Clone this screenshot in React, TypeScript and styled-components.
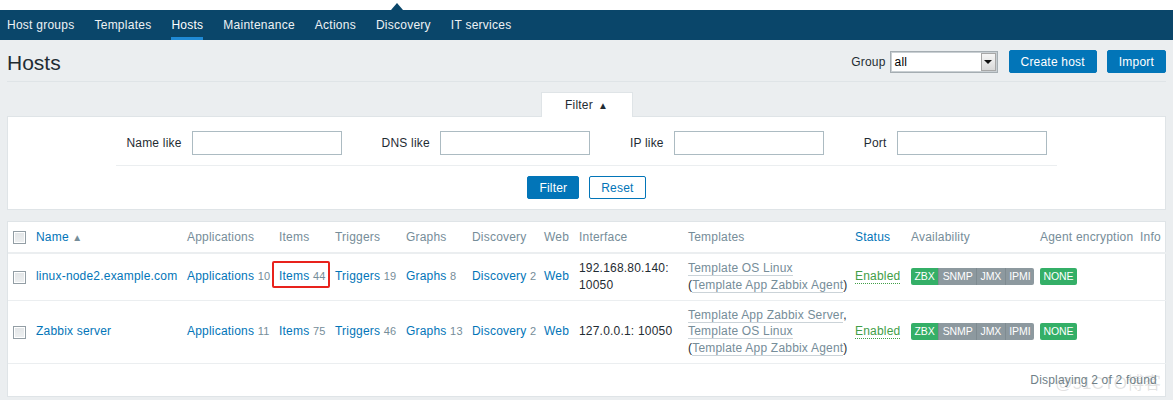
import React from "react";
import styled, { createGlobalStyle } from "styled-components";

const GlobalStyle = createGlobalStyle`
  body {
    margin: 0;
    background: #ebeef0;
    font-family: "Liberation Sans", Arial, sans-serif;
    font-size: 12px;
    letter-spacing: 0.2px;
    color: #1f2c33;
  }
`;

const TopStrip = styled.div`
  height: 10px;
  background: #fff;
  position: relative;

  &::after {
    content: "";
    position: absolute;
    left: 391px;
    bottom: 0;
    border-left: 6px solid transparent;
    border-right: 6px solid transparent;
    border-bottom: 7px solid #0a466a;
  }
`;

const SubNav = styled.nav`
  display: flex;
  gap: 20px;
  height: 30px;
  padding-left: 7px;
  background: #0a466a;
  letter-spacing: 0.25px;
`;

const NavLink = styled.a<{ $active?: boolean }>`
  display: flex;
  align-items: center;
  color: ${(p) => (p.$active ? "#ffffff" : "#eef2f5")};
  text-decoration: none;
  box-shadow: ${(p) => (p.$active ? "inset 0 -3px 0 #1f8ad6" : "none")};
`;

const PageHeader = styled.header`
  display: flex;
  align-items: center;
  justify-content: space-between;
  height: 39px;
  padding-top: 2px;
  margin: 0 7px;
  border-bottom: 1px solid #dfe4e7;
`;

const Title = styled.h1`
  margin: 2px 0 0;
  font-size: 21px;
  font-weight: normal;
  letter-spacing: 0;
  color: #1f2c33;
`;

const Controls = styled.div`
  display: flex;
  align-items: center;
`;

const GroupLabel = styled.span`
  margin-right: 4px;
`;

const GroupSelect = styled.div`
  display: flex;
  width: 108px;
  height: 22px;
  box-sizing: border-box;
  border: 1px solid #a5adb2;
  box-shadow: inset 0 0 0 1px #c9cfd3;
  background: #fff;
  margin-right: 11px;
`;

const SelectValue = styled.span`
  flex: 1;
  padding-left: 4px;
  line-height: 20px;
  color: #000;
`;

const SelectArrow = styled.span`
  width: 15px;
  margin: 1px;
  box-sizing: border-box;
  border: 1px solid #a7a7a7;
  background: linear-gradient(#f6f6f6, #d9d9d9);
  display: flex;
  align-items: center;
  justify-content: center;

  &::before {
    content: "";
    border-left: 4px solid transparent;
    border-right: 4px solid transparent;
    border-top: 4px solid #111;
  }
`;

const Button = styled.button<{ $outline?: boolean }>`
  height: 23px;
  padding: 0 11px;
  border-radius: 2px;
  border: 1px solid #0275b8;
  background: ${(p) => (p.$outline ? "#fff" : "#0275b8")};
  color: ${(p) => (p.$outline ? "#0275b8" : "#fff")};
  font: inherit;
  letter-spacing: inherit;
  cursor: pointer;

  & + & {
    margin-left: 10px;
  }
`;

const FilterSection = styled.section`
  display: flex;
  flex-direction: column;
  margin: 10px 7px 0;
`;

const FilterTab = styled.div`
  align-self: center;
  width: 92px;
  height: 25px;
  box-sizing: border-box;
  margin-bottom: -1px;
  background: #fff;
  border: 1px solid #dfe4e7;
  border-bottom: none;
  display: flex;
  align-items: center;
  justify-content: center;
  gap: 5px;
  position: relative;
  z-index: 1;
`;

const SmallArrow = styled.span<{ $color?: string }>`
  font-size: 10px;
  color: ${(p) => p.$color ?? "#1f2c33"};
`;

const FilterBox = styled.div`
  background: #fff;
  border: 1px solid #dfe4e7;
  padding: 14px 0 10px;
`;

const FieldsRow = styled.div`
  display: flex;
  gap: 40px;
  width: fit-content;
  margin: 0 auto;
  padding: 0 10px 10px;
  border-bottom: 1px solid #ebeef0;
`;

const Field = styled.label`
  display: flex;
  align-items: center;
  gap: 10px;
`;

const TextInput = styled.input`
  width: 150px;
  height: 24px;
  box-sizing: border-box;
  border: 1px solid #acbbc2;
  background: #fff;
  margin: 0;
`;

const ButtonRow = styled.div`
  display: flex;
  justify-content: center;
  margin-top: 10px;
`;

const TableCard = styled.div`
  position: relative;
  margin: 11px 7px 0;
  background: #fff;
  border: 1px solid #dfe4e7;
`;

const Table = styled.table`
  width: 100%;
  border-collapse: collapse;
  table-layout: fixed;
`;

const Col = styled.col<{ $w: number }>`
  width: ${(p) => p.$w}px;
`;

const Th = styled.th`
  padding: 7px 5px 6px;
  text-align: left;
  font-weight: normal;
  color: #768d99;
  line-height: 17px;
  white-space: nowrap;
  border-bottom: 2px solid #ebeef0;
`;

const Td = styled.td`
  padding: 6px 5px;
  line-height: 16.8px;
  white-space: nowrap;
  vertical-align: middle;
  border-bottom: 1px solid #ebeef0;
`;

const Checkbox = styled.span`
  display: inline-block;
  width: 13px;
  height: 13px;
  box-sizing: border-box;
  border: 1px solid #939ea5;
  box-shadow: inset 0 0 0 1px #fff;
  background: linear-gradient(#e2e5e7, #eef0f1);
  vertical-align: middle;
`;

const Link = styled.a`
  color: #0275b8;
  text-decoration: none;
`;

const Count = styled.span`
  color: #768d99;
  font-size: 11px;
`;

const Highlight = styled.span`
  position: relative;

  &::after {
    content: "";
    position: absolute;
    left: -7px;
    right: -4px;
    top: -8px;
    bottom: -5px;
    border: 2px solid #e8221c;
    border-radius: 2px;
  }
`;

const Line = styled.div``;

const TemplateLink = styled.a`
  color: #768d99;
  text-decoration: none;
  border-bottom: 1px solid #cbd3d8;
`;

const StatusLink = styled.a`
  color: #429e47;
  text-decoration: none;
  border-bottom: 1px dotted #429e47;
`;

const BadgeGroup = styled.span`
  display: inline-flex;
  border-radius: 2px;
  overflow: hidden;
  vertical-align: middle;
`;

const Badge = styled.span<{ $on?: boolean }>`
  background: ${(p) => (p.$on ? "#34af67" : "#8d999f")};
  color: #fff;
  font-size: 10.5px;
  letter-spacing: -0.1px;
  line-height: 17px;
  padding: 0 3.5px;

  & + & {
    border-left: 1px solid #7f8b91;
  }
`;

const Paging = styled.div`
  text-align: right;
  padding: 8px 8px;
  line-height: 16px;
  color: #6f7f88;
`;

const Watermark = styled.span`
  position: absolute;
  right: 4px;
  bottom: 2px;
  font-family: "Liberation Sans", "Noto Sans CJK SC", sans-serif;
  font-size: 17px;
  letter-spacing: 0;
  color: rgba(120, 120, 120, 0.22);
  pointer-events: none;
`;

type TemplateLine = { pre?: string; link: string; post?: string };

type Host = {
  name: string;
  apps: number;
  items: number;
  triggers: number;
  graphs: number;
  discovery: number;
  iface: string[];
  templates: TemplateLine[];
  highlight?: boolean;
};

const hosts: Host[] = [
  {
    name: "linux-node2.example.com",
    apps: 10,
    items: 44,
    triggers: 19,
    graphs: 8,
    discovery: 2,
    iface: ["192.168.80.140:", "10050"],
    templates: [
      { link: "Template OS Linux" },
      { pre: "(", link: "Template App Zabbix Agent", post: ")" },
    ],
    highlight: true,
  },
  {
    name: "Zabbix server",
    apps: 11,
    items: 75,
    triggers: 46,
    graphs: 13,
    discovery: 2,
    iface: ["127.0.0.1: 10050"],
    templates: [
      { link: "Template App Zabbix Server", post: "," },
      { link: "Template OS Linux" },
      { pre: "(", link: "Template App Zabbix Agent", post: ")" },
    ],
  },
];

const navItems = ["Host groups", "Templates", "Hosts", "Maintenance", "Actions", "Discovery", "IT services"];
const colWidths = [23, 151, 92, 56, 71, 66, 72, 35, 109, 167, 56, 129, 100, 31];
const filterFields = ["Name like", "DNS like", "IP like", "Port"];

const Availability = () => (
  <BadgeGroup>
    <Badge $on>ZBX</Badge>
    <Badge>SNMP</Badge>
    <Badge>JMX</Badge>
    <Badge>IPMI</Badge>
  </BadgeGroup>
);

const HostRow = ({ host }: { host: Host }) => {
  const items = (
    <>
      <Link>Items</Link> <Count>{host.items}</Count>
    </>
  );
  return (
    <tr>
      <Td>
        <Checkbox />
      </Td>
      <Td>
        <Link>{host.name}</Link>
      </Td>
      <Td>
        <Link>Applications</Link> <Count>{host.apps}</Count>
      </Td>
      <Td>{host.highlight ? <Highlight>{items}</Highlight> : items}</Td>
      <Td>
        <Link>Triggers</Link> <Count>{host.triggers}</Count>
      </Td>
      <Td>
        <Link>Graphs</Link> <Count>{host.graphs}</Count>
      </Td>
      <Td>
        <Link>Discovery</Link> <Count>{host.discovery}</Count>
      </Td>
      <Td>
        <Link>Web</Link>
      </Td>
      <Td>
        {host.iface.map((l) => (
          <Line key={l}>{l}</Line>
        ))}
      </Td>
      <Td>
        {host.templates.map((t, i) => (
          <Line key={i}>
            {t.pre}
            <TemplateLink>{t.link}</TemplateLink>
            {t.post}
          </Line>
        ))}
      </Td>
      <Td>
        <StatusLink>Enabled</StatusLink>
      </Td>
      <Td>
        <Availability />
      </Td>
      <Td>
        <BadgeGroup>
          <Badge $on>NONE</Badge>
        </BadgeGroup>
      </Td>
      <Td />
    </tr>
  );
};

export default function App() {
  return (
    <>
      <GlobalStyle />
      <TopStrip />
      <SubNav>
        {navItems.map((n) => (
          <NavLink key={n} $active={n === "Hosts"}>
            {n}
          </NavLink>
        ))}
      </SubNav>

      <PageHeader>
        <Title>Hosts</Title>
        <Controls>
          <GroupLabel>Group</GroupLabel>
          <GroupSelect>
            <SelectValue>all</SelectValue>
            <SelectArrow />
          </GroupSelect>
          <Button>Create host</Button>
          <Button>Import</Button>
        </Controls>
      </PageHeader>

      <FilterSection>
        <FilterTab>
          Filter <SmallArrow>▲</SmallArrow>
        </FilterTab>
        <FilterBox>
          <FieldsRow>
            {filterFields.map((f) => (
              <Field key={f}>
                {f}
                <TextInput />
              </Field>
            ))}
          </FieldsRow>
          <ButtonRow>
            <Button>Filter</Button>
            <Button $outline>Reset</Button>
          </ButtonRow>
        </FilterBox>
      </FilterSection>

      <TableCard>
        <Table>
          <colgroup>
            {colWidths.map((w, i) => (
              <Col key={i} $w={w} />
            ))}
          </colgroup>
          <thead>
            <tr>
              <Th>
                <Checkbox />
              </Th>
              <Th>
                <Link>Name</Link> <SmallArrow $color="#768d99">▲</SmallArrow>
              </Th>
              <Th>Applications</Th>
              <Th>Items</Th>
              <Th>Triggers</Th>
              <Th>Graphs</Th>
              <Th>Discovery</Th>
              <Th>Web</Th>
              <Th>Interface</Th>
              <Th>Templates</Th>
              <Th>
                <Link>Status</Link>
              </Th>
              <Th>Availability</Th>
              <Th>Agent encryption</Th>
              <Th>Info</Th>
            </tr>
          </thead>
          <tbody>
            {hosts.map((h) => (
              <HostRow key={h.name} host={h} />
            ))}
          </tbody>
        </Table>
        <Paging>Displaying 2 of 2 found</Paging>
        <Watermark>@51CTO博客</Watermark>
      </TableCard>
    </>
  );
}
